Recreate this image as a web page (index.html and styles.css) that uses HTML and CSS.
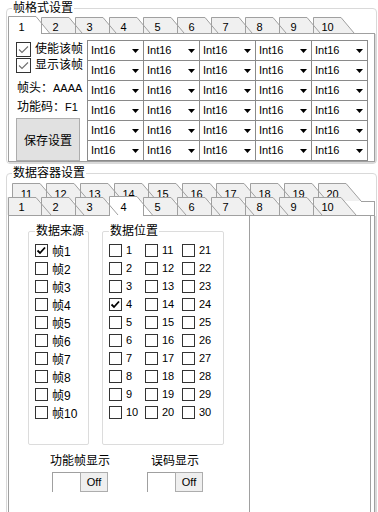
FILE: index.html
```html
<!DOCTYPE html>
<html lang="zh-CN">
<head>
<meta charset="utf-8">
<title>帧格式设置</title>
<link rel="stylesheet" href="styles.css">
</head>
<body>
<div class="group g1">
  <div class="gtitle">帧格式设置</div>
  <div class="strip s1">
    <svg class="sbg" width="371" height="18" viewBox="0 0 371 18">
      <defs>
        <path id="t1f" d="M0 17V1H28L41 17Z"/>
        <path id="t1s" d="M.5 17V1.5H28L41 17"/>
      </defs>
      <g fill="#f0f0f0">
        <use href="#t1f" x="34"/><use href="#t1f" x="68"/><use href="#t1f" x="102"/><use href="#t1f" x="136"/><use href="#t1f" x="170"/><use href="#t1f" x="204"/><use href="#t1f" x="238"/><use href="#t1f" x="272"/><use href="#t1f" x="306"/>
      </g>
      <path d="M1 17V0H29L43 17Z" fill="#fff"/>
      <rect x="2" y="17" width="32" height="1" fill="#fff"/>
      <g fill="none" stroke="#a0a0a0">
        <use href="#t1s" x="34"/><use href="#t1s" x="68"/><use href="#t1s" x="102"/><use href="#t1s" x="136"/><use href="#t1s" x="170"/><use href="#t1s" x="204"/><use href="#t1s" x="238"/><use href="#t1s" x="272"/><use href="#t1s" x="306"/>
        <path d="M1.5 18V.5H29L42.5 17"/>
      </g>
    </svg>
    <span class="tab">1</span><span class="tab">2</span><span class="tab">3</span><span class="tab">4</span><span class="tab">5</span><span class="tab">6</span><span class="tab">7</span><span class="tab">8</span><span class="tab">9</span><span class="tab">10</span>
  </div>
  <div class="panel p1">
    <div class="lcol">
      <div class="chk first"><svg class="cb" width="15" height="15" viewBox="0 0 15 15"><rect x=".5" y=".5" width="14" height="14" fill="#fff" stroke="#333"/><path d="M3 7.5l3 3 6-6" fill="none" stroke="#707070" stroke-width="1.1"/></svg><span>使能该帧</span></div>
      <div class="chk"><svg class="cb" width="15" height="15" viewBox="0 0 15 15"><rect x=".5" y=".5" width="14" height="14" fill="#fff" stroke="#333"/><path d="M3 7.5l3 3 6-6" fill="none" stroke="#707070" stroke-width="1.1"/></svg><span>显示该帧</span></div>
      <div class="info i1">帧头：<span class="lat">AAAA</span></div>
      <div class="info i2">功能码：<span class="lat">F1</span></div>
      <div class="btn">保存设置</div>
    </div>
    <div class="grid">
      <div class="cell">Int16</div><div class="cell">Int16</div><div class="cell">Int16</div><div class="cell">Int16</div><div class="cell">Int16</div>
      <div class="cell">Int16</div><div class="cell">Int16</div><div class="cell">Int16</div><div class="cell">Int16</div><div class="cell">Int16</div>
      <div class="cell">Int16</div><div class="cell">Int16</div><div class="cell">Int16</div><div class="cell">Int16</div><div class="cell">Int16</div>
      <div class="cell">Int16</div><div class="cell">Int16</div><div class="cell">Int16</div><div class="cell">Int16</div><div class="cell">Int16</div>
      <div class="cell">Int16</div><div class="cell">Int16</div><div class="cell">Int16</div><div class="cell">Int16</div><div class="cell">Int16</div>
      <div class="cell">Int16</div><div class="cell">Int16</div><div class="cell">Int16</div><div class="cell">Int16</div><div class="cell">Int16</div>
    </div>
  </div>
</div>

<div class="group g2">
  <div class="gtitle">数据容器设置</div>
  <div class="strip back">
    <svg class="sbg" width="371" height="33" viewBox="0 0 371 33">
      <defs>
        <path id="bf" d="M0 18V0H28L43 18Z"/>
        <path id="bs" d="M.5 18V.5H28L43 18"/>
      </defs>
      <g fill="#f0f0f0">
        <use href="#bf" x="5"/><use href="#bf" x="39"/><use href="#bf" x="73"/><use href="#bf" x="107"/><use href="#bf" x="141"/><use href="#bf" x="175"/><use href="#bf" x="209"/><use href="#bf" x="243"/><use href="#bf" x="277"/><use href="#bf" x="311"/>
      </g>
      <g fill="none" stroke="#a0a0a0">
        <use href="#bs" x="5"/><use href="#bs" x="39"/><use href="#bs" x="73"/><use href="#bs" x="107"/><use href="#bs" x="141"/><use href="#bs" x="175"/><use href="#bs" x="209"/><use href="#bs" x="243"/><use href="#bs" x="277"/><use href="#bs" x="311"/>
        <path d="M354 18.5H368M367.5 18V33"/>
      </g>
    </svg>
    <span class="tab">11</span><span class="tab">12</span><span class="tab">13</span><span class="tab">14</span><span class="tab">15</span><span class="tab">16</span><span class="tab">17</span><span class="tab">18</span><span class="tab">19</span><span class="tab">20</span>
  </div>
  <div class="strip front">
    <svg class="sbg" width="371" height="20" viewBox="0 0 371 20">
      <defs>
        <path id="ff" d="M0 19V1H28L43 19Z"/>
        <path id="fs" d="M.5 19V1.5H28L43 19"/>
      </defs>
      <g fill="#f0f0f0">
        <use href="#ff" x="0"/><use href="#ff" x="34"/><use href="#ff" x="68"/><use href="#ff" x="136"/><use href="#ff" x="170"/><use href="#ff" x="204"/><use href="#ff" x="238"/><use href="#ff" x="272"/><use href="#ff" x="306"/>
      </g>
      <path d="M102 19V0H130L146 19Z" fill="#fff"/>
      <rect x="103" y="19" width="33" height="1" fill="#fff"/>
      <g fill="none" stroke="#a0a0a0">
        <use href="#fs" x="1"/><use href="#fs" x="34"/><use href="#fs" x="68"/><use href="#fs" x="136"/><use href="#fs" x="170"/><use href="#fs" x="204"/><use href="#fs" x="238"/><use href="#fs" x="272"/><use href="#fs" x="306"/>
        <path d="M102.5 20V.5H130L145.5 19"/>
      </g>
    </svg>
    <span class="tab">1</span><span class="tab">2</span><span class="tab">3</span><span class="tab">4</span><span class="tab">5</span><span class="tab">6</span><span class="tab">7</span><span class="tab">8</span><span class="tab">9</span><span class="tab">10</span>
  </div>
  <div class="panel p2">
    <div class="left2">
      <div class="boxes">
        <div class="sgroup src">
          <div class="gtitle">数据来源</div>
          <div class="list">
            <div class="row"><span class="box"><svg width="11" height="11" viewBox="0 0 11 11"><path d="M1.5 5.5l2.5 2.5 5-5.5" fill="none" stroke="#000" stroke-width="1.8"/></svg></span>帧1</div>
            <div class="row"><span class="box"></span>帧2</div>
            <div class="row"><span class="box"></span>帧3</div>
            <div class="row"><span class="box"></span>帧4</div>
            <div class="row"><span class="box"></span>帧5</div>
            <div class="row"><span class="box"></span>帧6</div>
            <div class="row"><span class="box"></span>帧7</div>
            <div class="row"><span class="box"></span>帧8</div>
            <div class="row"><span class="box"></span>帧9</div>
            <div class="row"><span class="box"></span>帧10</div>
          </div>
        </div>
        <div class="sgroup pos">
          <div class="gtitle">数据位置</div>
          <div class="pgrid">
            <div class="row"><span class="box"></span>1</div><div class="row"><span class="box"></span>11</div><div class="row"><span class="box"></span>21</div>
            <div class="row"><span class="box"></span>2</div><div class="row"><span class="box"></span>12</div><div class="row"><span class="box"></span>22</div>
            <div class="row"><span class="box"></span>3</div><div class="row"><span class="box"></span>13</div><div class="row"><span class="box"></span>23</div>
            <div class="row"><span class="box"><svg width="11" height="11" viewBox="0 0 11 11"><path d="M1.5 5.5l2.5 2.5 5-5.5" fill="none" stroke="#000" stroke-width="1.8"/></svg></span>4</div><div class="row"><span class="box"></span>14</div><div class="row"><span class="box"></span>24</div>
            <div class="row"><span class="box"></span>5</div><div class="row"><span class="box"></span>15</div><div class="row"><span class="box"></span>25</div>
            <div class="row"><span class="box"></span>6</div><div class="row"><span class="box"></span>16</div><div class="row"><span class="box"></span>26</div>
            <div class="row"><span class="box"></span>7</div><div class="row"><span class="box"></span>17</div><div class="row"><span class="box"></span>27</div>
            <div class="row"><span class="box"></span>8</div><div class="row"><span class="box"></span>18</div><div class="row"><span class="box"></span>28</div>
            <div class="row"><span class="box"></span>9</div><div class="row"><span class="box"></span>19</div><div class="row"><span class="box"></span>29</div>
            <div class="row"><span class="box"></span>10</div><div class="row"><span class="box"></span>20</div><div class="row"><span class="box"></span>30</div>
          </div>
        </div>
      </div>
      <div class="toggles">
        <div class="titem t1">
          <div class="tlabel">功能帧显示</div>
          <div class="tgl"><span class="tfield"></span><span class="tbtn">Off</span></div>
        </div>
        <div class="titem t2">
          <div class="tlabel">误码显示</div>
          <div class="tgl"><span class="tfield"></span><span class="tbtn">Off</span></div>
        </div>
      </div>
    </div>
    <div class="listbox"></div>
  </div>
</div>
</body>
</html>
```

FILE: styles.css
```css
html, body {
  margin: 0;
  padding: 0;
  overflow: hidden;
  background: #fff;
}
body {
  width: 378px;
  height: 512px;
  font-family: "Liberation Sans", "Noto Sans CJK SC", sans-serif;
  font-size: 12px;
  color: #000;
}

.group {
  box-sizing: border-box;
  width: 371px;
  margin-left: 6px;
  border: 1px solid #d9d9d9;
  border-radius: 4px;
}
.g1 {
  margin-top: 8px;
  padding-bottom: 1px;
}
.g2 {
  margin-top: 9px;
  height: 420px;
}
.gtitle {
  width: max-content;
  margin: -8px 0 0 5px;
  padding: 0 1px;
  height: 15px;
  line-height: 15px;
  font-size: 12px;
  background: #fff;
}

/* tab strips */
.strip {
  position: relative;
  z-index: 1;
  display: flex;
}
.sbg {
  position: absolute;
  left: 0;
  top: 0;
  overflow: visible;
  z-index: -1;
}
.tab {
  flex: none;
  width: 29px;
  padding-right: 5px;
  padding-top: 2px;
  text-align: center;
  font-size: 11px;
  line-height: 18px;
  height: 18px;
}
.s1 { height: 17px; }
.back {
  height: 13px;
  margin-top: 2px;
  padding-left: 5px;
}
.front {
  height: 19px;
  z-index: 2;
}

/* panels */
.panel {
  box-sizing: border-box;
  width: 367px;
  margin-left: 1px;
  border: 1px solid #a0a0a0;
  box-shadow: 1px 1px 0 #dadada;
  background: #fff;
}
.p1 {
  height: 129px;
  padding: 6px 0 0 7px;
  display: flex;
}
.lcol {
  width: 71px;
  flex: none;
  display: flex;
  flex-direction: column;
}
.chk {
  display: flex;
  align-items: center;
  gap: 4px;
  height: 16px;
  line-height: 16px;
}
.chk.first { margin-top: 1px; }
.cb { flex: none; }
.info {
  height: 16px;
  line-height: 16px;
  padding-left: 1px;
  white-space: nowrap;
}
.i1 { margin-top: 7px; }
.i2 { margin-top: 3px; }
.lat { font-size: 11px; }
.btn {
  margin-top: 3px;
  box-sizing: border-box;
  width: 64px;
  height: 43px;
  border: 1px solid #adadad;
  background: #e1e1e1;
  display: flex;
  align-items: center;
  justify-content: center;
  font-size: 12px;
}

.grid {
  align-self: flex-start;
  display: grid;
  grid-template-columns: repeat(5, 56px);
  grid-auto-rows: 20px;
  border-left: 1px solid #8a8a8a;
  border-top: 1px solid #8a8a8a;
}
.cell {
  box-sizing: border-box;
  border-right: 1px solid #8a8a8a;
  border-bottom: 1px solid #8a8a8a;
  padding: 0 4px 0 3px;
  display: flex;
  align-items: center;
  justify-content: space-between;
  font-size: 11px;
  line-height: 19px;
}
.cell::after {
  content: "";
  width: 7px;
  height: 4px;
  margin-top: 1px;
  background: #000;
  clip-path: polygon(0 0, 100% 0, 50% 100%);
}

/* second panel */
.p2 {
  height: 320px;
  display: flex;
}
.left2 {
  width: 240px;
  flex: none;
}
.listbox {
  box-sizing: border-box;
  width: 122px;
  border: 1px solid #a0a0a0;
  border-top: none;
}
.boxes {
  display: flex;
  gap: 13px;
  margin: 15px 0 0 19px;
}
.sgroup {
  box-sizing: border-box;
  height: 214px;
  border: 1px solid #dcdcdc;
  border-radius: 2px;
}
.sgroup .gtitle { margin-left: 6px; }
.src { width: 61px; }
.pos { width: 122px; }
.list {
  margin-top: 2px;
  padding-left: 6px;
}
.pgrid {
  margin-top: 2px;
  padding-left: 6px;
  display: grid;
  grid-template-columns: 36px 37px 36px;
}
.row {
  display: flex;
  align-items: center;
  gap: 4px;
  height: 18px;
  white-space: nowrap;
}
.pgrid .row { font-size: 11px; }
.box {
  flex: none;
  box-sizing: border-box;
  width: 13px;
  height: 13px;
  border: 1px solid #333;
  background: #fff;
  display: flex;
}

.toggles {
  display: flex;
  margin: 8px 0 0 41px;
}
.titem {
  display: flex;
  flex-direction: column;
  align-items: center;
}
.t1 { width: 60px; }
.t2 { width: 56px; margin-left: 37px; }
.tlabel {
  height: 16px;
  line-height: 16px;
  white-space: nowrap;
}
.tgl {
  margin-top: 3px;
  display: flex;
  width: 56px;
  height: 20px;
}
.tfield {
  box-sizing: border-box;
  width: 28px;
  border-left: 1px solid #a0a0a0;
  border-top: 1px solid #a0a0a0;
}
.tbtn {
  flex: 1;
  box-sizing: border-box;
  border: 1px solid #adadad;
  background: #efefef;
  display: flex;
  align-items: center;
  justify-content: center;
  font-size: 11px;
}
```
